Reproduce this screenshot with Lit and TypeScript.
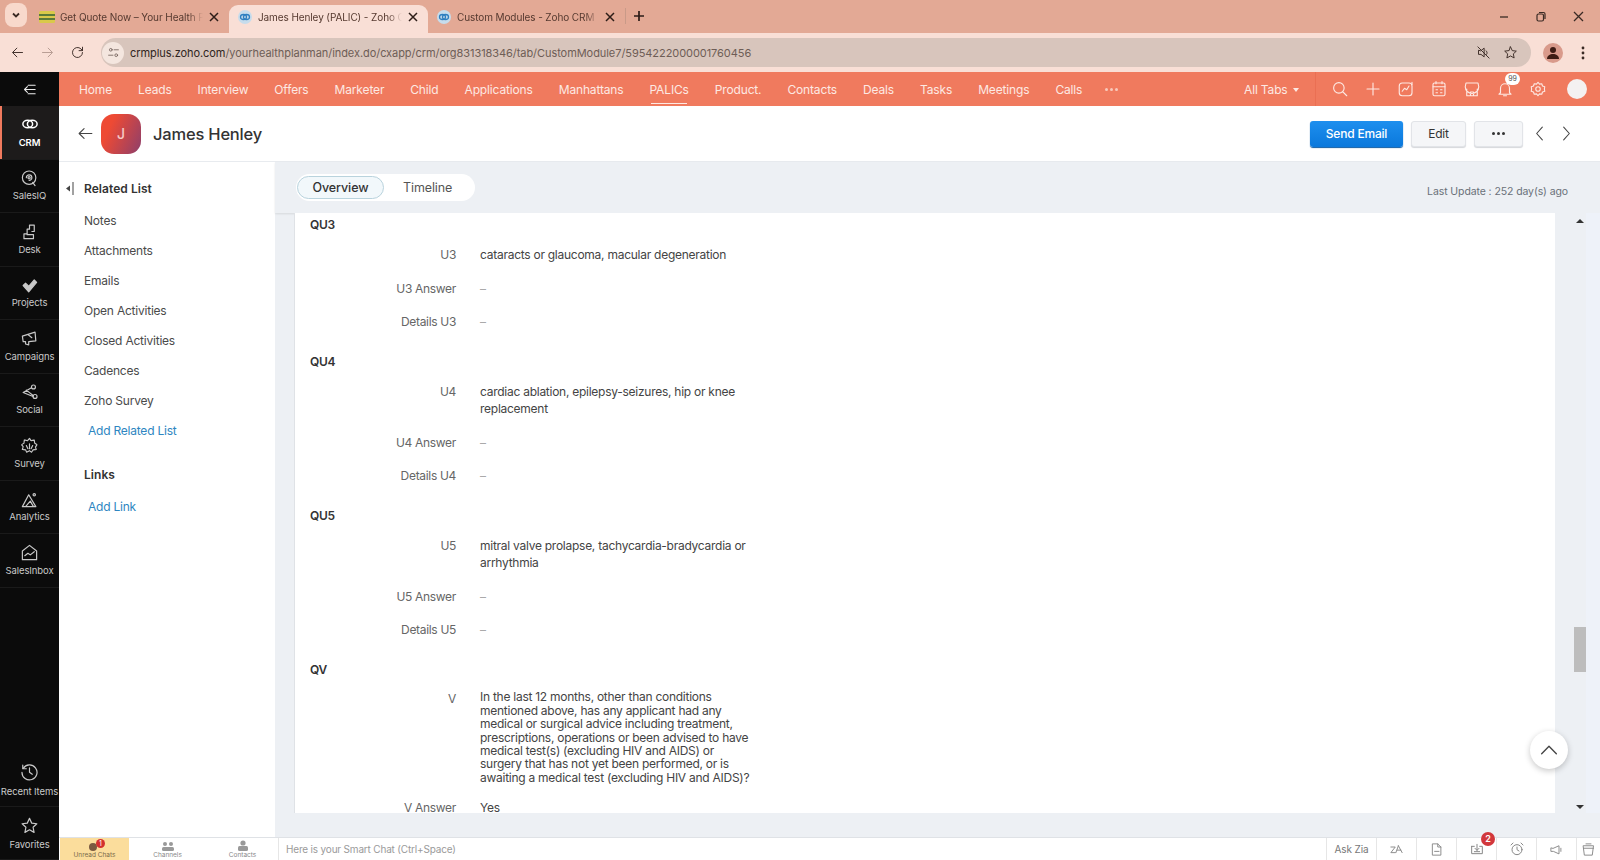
import { LitElement, html, css, svg } from "lit";
import { customElement } from "lit/decorators.js";

const ic = (body: unknown, size = 18, vb = 24) => html`<svg class="ic" width=${size} height=${size} viewBox="0 0 ${vb} ${vb}" fill="none" stroke="currentColor" stroke-width="1.5" stroke-linecap="round" stroke-linejoin="round">${body}</svg>`;

const railItems: [string, unknown][] = [
  ["SalesIQ", svg`<circle cx="11.500" cy="11" r="8.500"/><path d="M8 11a3.500 3.500 0 1 1 3.500 3.500"/><circle cx="11.500" cy="11" r="1.400"/><path d="M16 17l3 4"/>`],
  ["Desk", svg`<path d="M12 4h6v8h-3M9 9v7h8v5H5v-6h4M12 4v5H9"/>`],
  ["Projects", svg`<path d="M4 12l3-3 4 4 7-8 3 3-10 12z" fill="currentColor"/>`],
  ["Campaigns", svg`<path d="M3 9l16-5 1 11-9 1v4l-4-1v-3H4z"/><path d="M10 7l5 4"/>`],
  ["Social", svg`<circle cx="17" cy="5" r="2.500"/><circle cx="19" cy="17" r="2.500"/><path d="M14.500 6L4 12l12.500 5M8 9l9 7"/>`],
  ["Survey", svg`<path d="M12 3l2 3 4-1 .5 4 3 2-2 3 1 3-4 .5-2 3-2.500-2-3.500 2-1.500-3-4-.5 1-3.500-2-2.500 3-2 .5-4 4 1z" stroke-dasharray="3 1"/><path d="M8 12l2 4M12 10v6M16 12l-2 4"/>`],
  ["Analytics", svg`<path d="M3 21L11 6l9 15zM7 21l6-7 4 7"/><circle cx="18" cy="6" r="1.500"/>`],
  ["SalesInbox", svg`<path d="M3 10l9-7 9 7v11H3z"/><path d="M6 16l4-3 3 2 5-4"/>`],
];
const bottomRail: [string, unknown][] = [
  ["Recent Items", svg`<path d="M4 8a9.500 9.500 0 1 1-1.500 5"/><path d="M3.500 4v4.500H8M12 7.500V13l3.500 2.500"/>`],
  ["Favorites", svg`<path d="M12 3l2.800 6 6.500.8-4.800 4.400 1.300 6.500L12 17.500 6.200 20.700l1.300-6.500L2.700 9.800 9.200 9z"/>`],
];
const nav = ["Home","Leads","Interview","Offers","Marketer","Child","Applications","Manhattans","PALICs","Product.","Contacts","Deals","Tasks","Meetings","Calls"];
const related = ["Notes","Attachments","Emails","Open Activities","Closed Activities","Cadences","Zoho Survey"];

const zohoFav = html`<svg width="16" height="16" viewBox="0 0 16 16"><circle cx="8" cy="8" r="7" fill="#c6dcec"/><ellipse cx="6.500" cy="8" rx="3" ry="2.500" fill="none" stroke="#2f7fc0" stroke-width="1.300"/><ellipse cx="9.500" cy="8" rx="3" ry="2.500" fill="none" stroke="#2f7fc0" stroke-width="1.300"/></svg>`;

type Row = { l: string; v: string; tight?: boolean };
const sections: { h: string; rows: Row[] }[] = [
  { h: "QU3", rows: [{ l: "U3", v: "cataracts or glaucoma, macular degeneration" }, { l: "U3 Answer", v: "–" }, { l: "Details U3", v: "–" }] },
  { h: "QU4", rows: [{ l: "U4", v: "cardiac ablation, epilepsy-seizures, hip or knee replacement" }, { l: "U4 Answer", v: "–" }, { l: "Details U4", v: "–" }] },
  { h: "QU5", rows: [{ l: "U5", v: "mitral valve prolapse, tachycardia-bradycardia or arrhythmia" }, { l: "U5 Answer", v: "–" }, { l: "Details U5", v: "–" }] },
  { h: "QV", rows: [{ l: "V", v: "In the last 12 months, other than conditions mentioned above, has any applicant had any medical or surgical advice including treatment, prescriptions, operations or been advised to have medical test(s) (excluding HIV and AIDS) or surgery that has not yet been performed, or is awaiting a medical test (excluding HIV and AIDS)?", tight: true }, { l: "V Answer", v: "Yes" }] },
];

@customElement("app-root")
export class AppRoot extends LitElement {
  static styles = css`
    :host { display: flex; flex-direction: column; width: 1600px; height: 860px; overflow: hidden; position: relative; font-family: Inter, "Liberation Sans", sans-serif; color: #333; background: #fff; }
    * { box-sizing: border-box; }
    svg { display: block; flex: none; }

    .tabstrip { height: 33px; flex: none; background: #e3a995; display: flex; align-items: flex-end; padding-left: 5px; position: relative; }
    .tabdrop { width: 22px; height: 24px; margin-bottom: 6px; border-radius: 8px; background: #f8d9cc; display: flex; align-items: center; justify-content: center; color: #3a2a24; margin-right: 4px; }
    .tab { height: 28px; display: flex; align-items: center; font-size: 10px; color: #55392f; padding: 0 10px 4px 8px; letter-spacing: -.1px; white-space: nowrap; border-radius: 9px 9px 0 0; }
    .tab1 { width: 198px; }
    .tab2 { width: 199px; background: #f9dfd6; }
    .tab3 { width: 197px; }
    .tab .t { flex: 1; min-width: 0; margin-left: 5px; -webkit-mask-image: linear-gradient(90deg,#000 90%,transparent); mask-image: linear-gradient(90deg,#000 90%,transparent); }
    .tab .x { color: #2d1d18; margin-left: 6px; }
    .plus { color: #2d1d18; border-left: 1px solid #c99a88; height: 16px; margin-bottom: 9px; padding-left: 7px; }
    .win { margin-left: auto; display: flex; align-items: center; gap: 27px; padding-right: 16px; height: 33px; color: #3a2a24; }

    .toolbar { height: 39px; flex: none; background: #f9dfd6; display: flex; align-items: center; padding: 0 8px 0 10px; color: #3a2a24; }
    .navbtn { width: 17px; margin-right: 13px; }
    .navbtn.dim { color: #b49a90; }
    .url { margin-left: 1px; flex: none; width: 1430px; height: 29px; border-radius: 15px; background: #d8c5bc; display: flex; align-items: center; padding: 0 13px 0 1px; font-size: 11px; color: #6e5d56; letter-spacing: -.06px; }
    .url b { font-weight: 400; color: #2f2420; }
    .site { width: 22px; height: 22px; border-radius: 50%; background: #f4e6df; display: flex; align-items: center; justify-content: center; margin-right: 6px; }
    .url .end { margin-left: auto; display: flex; gap: 12px; align-items: center; color: #3a2a24; }
    .profile { margin-left: 12px; width: 20px; height: 20px; border-radius: 50%; background: #d99a8b; display: flex; align-items: center; justify-content: center; color: #3e1c14; }
    .menu { margin-left: 18px; }

    .app { flex: 1; min-height: 0; display: flex; }
    .rail { width: 59px; flex: none; background: #0b0b0b; color: #d6d6d6; display: flex; flex-direction: column; }
    .railtop { height: 34px; flex: none; display: flex; align-items: center; justify-content: center; color: #eee; }
    .ri { height: 53.500px; flex: none; display: flex; flex-direction: column; align-items: center; padding-top: 9px; gap: 2.500px; font-size: 9.500px; color: #c9c9c9; border-bottom: 1px solid #1a1a1a; white-space: nowrap; letter-spacing: -.1px; }
    .ri.on { background: #1d1b1b; box-shadow: inset 2px 0 0 #f07a5e; color: #fff; font-weight: 600; gap: 3.500px; }
    .ri.b { gap: 4.500px; }
    .railgap { flex: 1; }

    .main { flex: 1; min-width: 0; display: flex; flex-direction: column; }
    .nav { height: 34px; flex: none; background: #f07a5e; display: flex; align-items: center; padding-left: 20px; color: #fde9e3; font-size: 12px; letter-spacing: -.15px; gap: 26px; white-space: nowrap; }
    .nav .cur { position: relative; }
    .nav .cur::after { content: ""; position: absolute; left: 2px; right: 2px; bottom: -7px; height: 1px; background: #fde9e3; }
    .dots { display: flex; gap: 2px; }
    .nav .dots { margin-left: -3px; color: #f8c9bb; }
    .dots i { width: 3px; height: 3px; border-radius: 50%; background: currentColor; }
    .alltabs { margin-left: auto; width: 72px; height: 34px; border-right: 1px solid #ea6f53; display: flex; align-items: center; gap: 5px; }
    .alltabs::after { content: ""; border: 3px solid transparent; border-top: 4px solid #fde9e3; margin-top: 4px; }
    .tools { display: flex; align-items: center; gap: 15px; padding: 0 13px 0 15px; margin-left: -26px; position: relative; }
    .bell { position: relative; }
    .bell span { position: absolute; left: 9px; top: -7px; background: #fff; color: #555; border-radius: 7px; font-size: 7px; width: 15px; height: 12px; text-align: center; line-height: 12px; }
    .me { width: 20px; height: 20px; border-radius: 50%; background: #f4f1f1; margin-left: 5px; }

    .hdr { height: 56px; flex: none; background: #fff; display: flex; align-items: center; padding-left: 18px; border-bottom: 1px solid #e8ebef; }
    .hdr .back { color: #444; margin-right: 7px; }
    .ava { width: 40px; height: 40px; border-radius: 13px; background: linear-gradient(115deg,#ee4a34 25%,#8d3f6b 100%); color: #f6c9c6; display: flex; align-items: center; justify-content: center; font-size: 14px; font-weight: 500; margin-right: 12px; }
    .name { font-size: 16.500px; font-weight: 500; color: #333; letter-spacing: -.2px; }
    .acts { margin-left: auto; display: flex; align-items: center; gap: 8px; padding-right: 25px; }
    .btn { height: 26px; border-radius: 3px; font-size: 12px; display: flex; align-items: center; justify-content: center; letter-spacing: -.2px; }
    .primary { width: 93px; background: linear-gradient(#1e8fee,#0a78dc); color: #fff; font-weight: 500; box-shadow: 0 1px 1px #0b5aa5; }
    .plain { background: #f5f6f8; color: #333; border: 1px solid #e2e4e8; box-shadow: 0 1px 1px #d5d7db; }
    .edit { width: 55px; }
    .more { width: 49px; }
    .pg { display: flex; gap: 10px; margin-left: 0; color: #444; }

    .body { flex: 1; min-height: 0; display: flex; }
    .side { width: 216px; flex: none; background: #fff; padding: 18px 0 0 25px; font-size: 12px; color: #4a4a4a; letter-spacing: -.22px; position: relative; }
    .side h4 { margin: 0; font-size: 12px; font-weight: 600; color: #333; height: 17px; line-height: 17px; letter-spacing: .05px; }
    .collapse { position: absolute; left: 7px; top: 20px; color: #444; }
    .side ul { list-style: none; margin: 9px 0 0; padding: 0; }
    .side li { height: 30px; line-height: 30px; }
    .side .add { color: #2e86c1; padding-left: 4px; }
    .side .links { margin-top: 20px; }
    .side .addl { margin-top: 9px; height: 30px; line-height: 30px; }

    .work { flex: 1; min-width: 0; background: #edf0f4; display: flex; flex-direction: column; }
    .tabsbar { height: 51px; flex: none; display: flex; align-items: flex-start; padding: 12px 32px 0 21px; box-shadow: 0 1px 2px rgba(0,0,0,.1); position: relative; }
    .pill { width: 179px; height: 27px; background: #fff; border-radius: 14px; display: flex; align-items: center; padding-left: 1px; font-size: 12.500px; color: #555; letter-spacing: -.1px; }
    .pill .ov { width: 87px; height: 23px; border: 1px solid #b9d3dd; background: #f2f8fb; border-radius: 12px; display: flex; align-items: center; justify-content: center; color: #333; font-weight: 500; margin-right: 19px; }
    .upd { margin-left: auto; font-size: 10.500px; color: #6a7079; margin-top: 11px; letter-spacing: -.1px; }
    .view { flex: 1; min-height: 0; display: flex; padding-bottom: 24px; position: relative; }
    .card { margin-left: 19px; flex: 1; min-width: 0; background: #fff; border-left: 1px solid #dfe2e6; overflow: hidden; padding-top: 3px; font-size: 12px; letter-spacing: -.26px; color: #444; }
    .sec h5 { margin: 15px 0 5px 15px; font-size: 12px; font-weight: 600; height: 17px; line-height: 17px; color: #333; }
    .sec:first-child h5 { margin-top: 0; }
    .row { display: grid; grid-template-columns: 161px 270px; column-gap: 24px; padding: 8.200px 0; line-height: 17px; }
    .row.tight { padding-top: 7px; padding-bottom: 6.500px; line-height: 13.400px; }
    .row .l { text-align: right; color: #666; letter-spacing: -.32px; }
    .row.tight .l { line-height: 17px; }
    .dash { color: #aaa; }
    .sb { width: 45px; flex: none; position: relative; background: linear-gradient(90deg,#edf0f4 0,#edf0f4 70%,#eef2f9 70%); }
    .up, .down { position: absolute; left: 21px; border: 4px solid transparent; }
    .up { top: 2px; border-bottom: 4px solid #333; }
    .down { bottom: 0; border-top: 4px solid #333; }
    .thumb { position: absolute; left: 19px; width: 12px; height: 45px; top: 414px; background: #bdbdbd; }
    .totop { position: absolute; right: 32px; top: 518px; width: 38px; height: 38px; border-radius: 50%; background: #fff; box-shadow: 0 2px 6px rgba(0,0,0,.22); display: flex; align-items: center; justify-content: center; color: #444; }

    .bar { height: 23px; flex: none; background: #fff; border-top: 1px solid #dfe2e6; display: flex; align-items: stretch; color: #8a8a8a; }
    .chat { width: 75px; display: flex; flex-direction: column; align-items: center; justify-content: flex-end; font-size: 6.500px; color: #888; white-space: nowrap; position: relative; padding-bottom: 1px; }
    .chat.on { width: 69px; margin-left: 1px; margin-right: 1px; background: #fbdd9c; color: #7a6a4a; }
    .red { position: absolute; background: #d32f2f; color: #fff; border-radius: 50%; text-align: center; font-size: 7px; }
    .chat .red { width: 9px; height: 9px; line-height: 9px; left: 36px; top: 1px; }
    .ph { flex: 1; padding-left: 7px; margin-left: -2px; border-left: 1px solid #e6e6e6; font-size: 10px; color: #9a9a9a; display: flex; align-items: center; letter-spacing: -.18px; }
    .cell { width: 40px; flex: none; border-left: 1px solid #e6e6e6; display: flex; align-items: center; justify-content: center; position: relative; color: #888; }
    .cell.zia { width: 50px; font-size: 10px; color: #777; letter-spacing: -.1px; }
    .cell.last { width: 24px; overflow: hidden; }
    .cell .red { width: 14px; height: 14px; line-height: 14px; font-size: 9px; left: 24px; top: -6px; background: #d2373c; font-weight: 600; }
  `;

  render() {
    const close = html`<svg class="x" width="10" height="10" viewBox="0 0 10 10" stroke="currentColor" stroke-width="1.500"><path d="M1 1l8 8M9 1l-8 8"/></svg>`;
    return html`
      <div class="tabstrip">
        <div class="tabdrop"><svg width="10" height="10" viewBox="0 0 10 10" fill="none" stroke="currentColor" stroke-width="1.800"><path d="M2 3.500l3 3 3-3"/></svg></div>
        <div class="tab tab1"><svg width="16" height="14" viewBox="0 0 16 14"><rect y="1" width="16" height="12" rx="1.500" fill="#d9c94a"/><rect y="4" width="16" height="2" fill="#5a7a3a"/><rect y="8" width="16" height="2" fill="#5a7a3a"/></svg><span class="t">Get Quote Now – Your Health P</span>${close}</div>
        <div class="tab tab2">${zohoFav}<span class="t">James Henley (PALIC) - Zoho C</span>${close}</div>
        <div class="tab tab3">${zohoFav}<span class="t">Custom Modules - Zoho CRM</span>${close}</div>
        <div class="plus"><svg width="12" height="16" viewBox="0 0 12 16" stroke="currentColor" stroke-width="1.700"><path d="M6 3v10M1 8h10"/></svg></div>
        <div class="win">
          <svg width="10" height="10" viewBox="0 0 10 10" stroke="currentColor" stroke-width="1.300"><path d="M1 5h8"/></svg>
          <svg width="10" height="11" viewBox="0 0 10 11" fill="none" stroke="currentColor" stroke-width="1.200"><rect x="1" y="3" width="6.500" height="7" rx="1.500"/><path d="M3 1.500h4.500a1.500 1.500 0 0 1 1.500 1.500v5"/></svg>
          <svg width="11" height="11" viewBox="0 0 11 11" stroke="currentColor" stroke-width="1.300"><path d="M1 1l9 9M10 1l-9 9"/></svg>
        </div>
      </div>
      <div class="toolbar">
        <div class="navbtn">${ic(svg`<path d="M20 12H5M11 5l-7 7 7 7"/>`, 15)}</div>
        <div class="navbtn dim">${ic(svg`<path d="M4 12h15M13 5l7 7-7 7"/>`, 15)}</div>
        <div class="navbtn">${ic(svg`<path d="M20 12a8 8 0 1 1-2.500-5.800L20 9M20 3.500V9h-5.500"/>`, 15)}</div>
        <div class="url">
          <span class="site">${ic(svg`<circle cx="7" cy="7" r="2.500"/><path d="M13 7h8M3 17h8"/><circle cx="17" cy="17" r="2.500"/>`, 13)}</span>
          <span><b>crmplus.zoho.com</b>/yourhealthplanman/index.do/cxapp/crm/org831318346/tab/CustomModule7/5954222000001760456</span>
          <span class="end">
            ${ic(svg`<path d="M4 9v6h4l5 4V5L8 9zM16 9a4 4 0 0 1 1 6M3 3l18 18"/>`, 15)}
            ${ic(svg`<path d="M12 3l2.800 6 6.500.8-4.800 4.400 1.300 6.500L12 17.500 6.200 20.700l1.300-6.500L2.700 9.800 9.200 9z"/>`, 15)}
          </span>
        </div>
        <div class="profile"><svg width="12" height="13" viewBox="0 0 12 13" fill="currentColor"><circle cx="6" cy="4" r="3"/><path d="M0 13c0-3.500 3-5 6-5s6 1.500 6 5z"/></svg></div>
        <div class="menu"><svg width="4" height="14" viewBox="0 0 4 14" fill="currentColor"><circle cx="2" cy="2" r="1.400"/><circle cx="2" cy="7" r="1.400"/><circle cx="2" cy="12" r="1.400"/></svg></div>
      </div>
      <div class="app">
        <div class="rail">
          <div class="railtop">${ic(svg`<path d="M10 6h10M5 12h15M10 18h10M9 8l-4 4 4 4"/>`, 17)}</div>
          <div class="ri on"><svg width="18" height="18" viewBox="0 0 24 24" fill="none" stroke="currentColor" stroke-width="2"><ellipse cx="9" cy="12" rx="6.500" ry="5"/><ellipse cx="15" cy="12" rx="6.500" ry="5"/></svg><span>CRM</span></div>
          ${railItems.map(([n, i]) => html`<div class="ri">${ic(i, 19)}<span>${n}</span></div>`)}
          <div class="railgap"></div>
          ${bottomRail.map(([n, i]) => html`<div class="ri b">${ic(i, 19)}<span>${n}</span></div>`)}
        </div>
        <div class="main">
          <div class="nav">
            ${nav.map((n) => html`<span class=${n === "PALICs" ? "cur" : ""}>${n}</span>`)}
            <span class="dots"><i></i><i></i><i></i></span>
            <span class="alltabs">All Tabs</span>
            <div class="tools">
              ${ic(svg`<circle cx="10.500" cy="10.500" r="7"/><path d="M16 16l5 5"/>`, 18)}
              ${ic(svg`<path d="M12 4v16M4 12h16"/>`, 18)}
              ${ic(svg`<rect x="3" y="4" width="17" height="17" rx="4"/><path d="M7 15l3-4 3 2 3-5M20 3v3"/>`, 18)}
              ${ic(svg`<rect x="4" y="4" width="16" height="17" rx="2"/><path d="M4 9h16M8 13h2M14 13h2M8 17h2M14 17h2M8 2v3M16 2v3"/>`, 18)}
              ${ic(svg`<path d="M4 4h16l1 5a3 3 0 0 1-18 0zM5 12v9h14v-9M10 21v-5h4v5"/>`, 18)}
              <div class="bell">${ic(svg`<path d="M6 17V11a6 6 0 0 1 12 0v6l2 2H4zM10 21h4"/>`, 18)}<span>99</span></div>
              ${ic(svg`<path d="M12 3l2 2.500 3-.5 1 3 3 1-.5 3 .5 3-3 1-1 3-3-.5-2 2.500-2-2.500-3 .5-1-3-3-1 .5-3L3 9l3-1 1-3 3 .5z"/><circle cx="12" cy="12" r="3"/>`, 18)}
              <div class="me"></div>
            </div>
          </div>
          <div class="hdr">
            <div class="back">${ic(svg`<path d="M21 12H3M10 5l-7 7 7 7"/>`, 17)}</div>
            <div class="ava">J</div>
            <div class="name">James Henley</div>
            <div class="acts">
              <div class="btn primary">Send Email</div>
              <div class="btn plain edit">Edit</div>
              <div class="btn plain more"><span class="dots"><i></i><i></i><i></i></span></div>
              <div class="pg">
                ${ic(svg`<path d="M16 3l-8 9 8 9"/>`, 17)}
                ${ic(svg`<path d="M8 3l8 9-8 9"/>`, 17)}
              </div>
            </div>
          </div>
          <div class="body">
            <div class="side">
              <svg class="collapse" width="8" height="13" viewBox="0 0 8 13" fill="currentColor"><path d="M4 3.500v6L0 6.500z"/><rect x="6.500" y="0" width="1" height="13"/></svg>
              <h4>Related List</h4>
              <ul>
                ${related.map((r) => html`<li>${r}</li>`)}
                <li class="add">Add Related List</li>
              </ul>
              <h4 class="links">Links</h4>
              <div class="add addl">Add Link</div>
            </div>
            <div class="work">
              <div class="tabsbar">
                <div class="pill"><span class="ov">Overview</span><span>Timeline</span></div>
                <div class="upd">Last Update : 252 day(s) ago</div>
              </div>
              <div class="view">
                <div class="card">
                  ${sections.map((s) => html`<div class="sec"><h5>${s.h}</h5>
                    ${s.rows.map((r) => html`<div class="row ${r.tight ? "tight" : ""}"><div class="l">${r.l}</div><div class=${r.v === "–" ? "dash" : ""}>${r.v}</div></div>`)}
                  </div>`)}
                </div>
                <div class="sb"><span class="up"></span><span class="thumb"></span><span class="down"></span></div>
                <div class="totop">${ic(svg`<path d="M4 16l8-8 8 8"/>`, 22)}</div>
              </div>
            </div>
          </div>
          <div class="bar">
            <div class="chat on"><svg width="18" height="9" viewBox="0 0 18 9"><circle cx="7" cy="5" r="4" fill="#7a5a40"/></svg><span class="red">1</span><span>Unread Chats</span></div>
            <div class="chat"><svg width="14" height="10" viewBox="0 0 14 10" fill="#999"><circle cx="4" cy="3" r="2"/><circle cx="10" cy="3" r="2"/><rect x="1" y="6" width="12" height="4" rx="1.500"/></svg><span>Channels</span></div>
            <div class="chat"><svg width="12" height="11" viewBox="0 0 12 11" fill="#999"><circle cx="6" cy="3" r="2.600"/><rect x="1" y="6" width="10" height="5" rx="1.500"/></svg><span>Contacts</span></div>
            <div class="ph">Here is your Smart Chat (Ctrl+Space)</div>
            <div class="cell zia">Ask Zia</div>
            <div class="cell">${ic(svg`<path d="M3 8h7l-7 9h7M15 6l-4 11M15 6l6 11M13 13h6"/>`, 15)}</div>
            <div class="cell">${ic(svg`<path d="M6 3h8l5 5v13H6zM14 3v5h5M9 15h7"/>`, 15)}</div>
            <div class="cell">${ic(svg`<path d="M4 8h4M16 8h4v11H4V8M12 5v9M9 11l3 3 3-3M8 16h8"/>`, 16)}<span class="red">2</span></div>
            <div class="cell">${ic(svg`<circle cx="12" cy="13" r="7.500"/><path d="M12 9v4l3 2M3 6l3-3M21 6l-3-3"/>`, 16)}</div>
            <div class="cell">${ic(svg`<path d="M3 10v5h4l9 4V6l-9 4zM19 10v5"/>`, 15)}</div>
            <div class="cell last">${ic(svg`<path d="M4 6h16l-2 15H6zM4 10h16M8 3h8"/>`, 15)}</div>
          </div>
        </div>
      </div>
    `;
  }
}
